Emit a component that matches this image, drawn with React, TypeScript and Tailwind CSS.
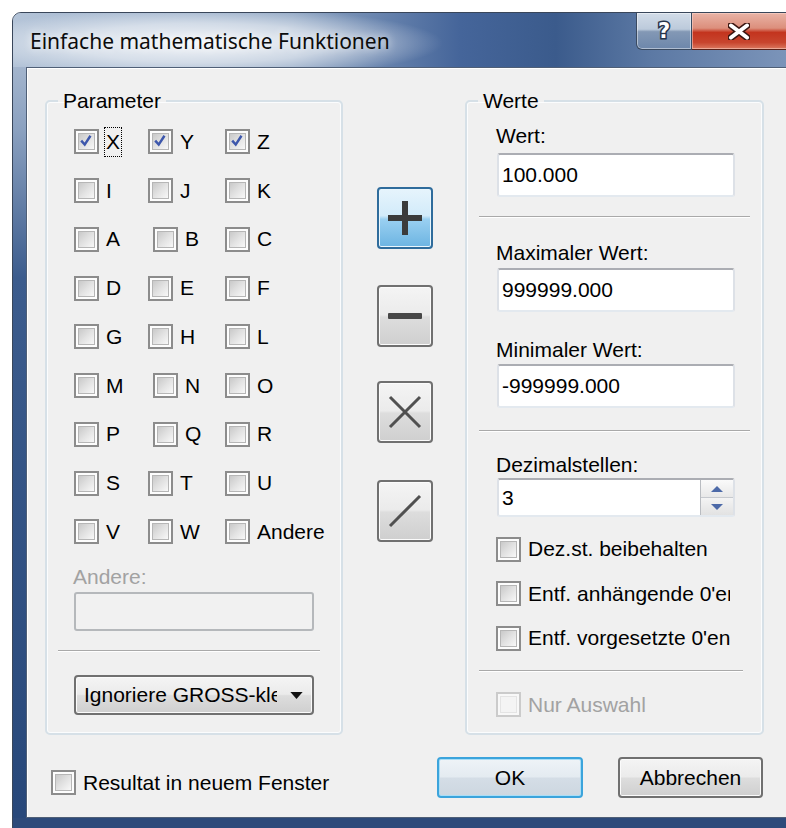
import clsx from "clsx";

const btn =
  "rounded-[4px] border-2 border-[#707070] bg-[linear-gradient(to_bottom,#f4f4f4_0%,#ebebeb_48%,#dddddd_52%,#cfcfcf_100%)] shadow-[inset_0_0_0_1px_#fbfbfb]";
const hotBtn =
  "rounded-[4px] border-2 border-[#2f6c9c] bg-[linear-gradient(to_bottom,#e6f4fc_0%,#d2ebfa_46%,#9ad0f1_52%,#6cb4e2_100%)] shadow-[inset_0_0_0_1px_#e9f6fd]";
const edit =
  "rounded-[3px] border-2 border-t-[#abadb3] border-x-[#dde1e7] border-b-[#e3e9ef] bg-white";

function Box({ checked = false, disabled = false }: { checked?: boolean; disabled?: boolean }) {
  return (
    <span
      className={clsx(
        "flex h-[25px] w-[25px] shrink-0 items-center justify-center border-2",
        disabled ? "border-[#cbcbcb] bg-[#f8f8f8]" : "border-[#8c8c8c] bg-[#fdfdfd]"
      )}
    >
      <span
        className={clsx(
          "relative h-[17px] w-[17px] border",
          disabled
            ? "border-[#e4e4e4] bg-[#f4f4f4]"
            : "border-[#b6b6b6] bg-[linear-gradient(135deg,#c9c9c9_0%,#e2e2e2_50%,#f8f8f8_100%)]"
        )}
      >
        {checked && (
          <svg viewBox="0 0 17 17" className="absolute left-0 top-0 h-[15px] w-[15px]">
            <path d="M2.5 7.5 L6.5 12 L13 2" fill="none" stroke="#3d57ac" strokeWidth="2.8" />
          </svg>
        )}
      </span>
    </span>
  );
}

function Check({
  label,
  checked,
  disabled,
  focus,
  shift,
  clip,
}: {
  label: string;
  checked?: boolean;
  disabled?: boolean;
  focus?: boolean;
  shift?: boolean;
  clip?: string;
}) {
  return (
    <div className={clsx("flex items-center", shift && "ml-[5px]")}>
      <Box checked={checked} disabled={disabled} />
      {focus ? (
        <span className="ml-[5px] border border-dotted border-black px-[1px] leading-[28px]">{label}</span>
      ) : (
        <span
          className={clsx(
            "ml-[7px] whitespace-nowrap",
            disabled && "text-[#a2a2a2]",
            clip && "overflow-hidden",
            clip
          )}
        >
          {label}
        </span>
      )}
    </div>
  );
}

function Separator({ className }: { className?: string }) {
  return <div className={clsx("h-[2px] border-y border-t-[#a9a9a9] border-b-white", className)} />;
}

const letters = [
  ["X", "Y", "Z"],
  ["I", "J", "K"],
  ["A", "B", "C"],
  ["D", "E", "F"],
  ["G", "H", "L"],
  ["M", "N", "O"],
  ["P", "Q", "R"],
  ["S", "T", "U"],
  ["V", "W", "Andere"],
];
const shifted = ["B", "N", "Q"];
const checkedOn = ["X", "Y", "Z"];

function Parameter() {
  return (
    <fieldset className="h-[645px] w-[298px] rounded-[5px] border-2 border-[#d6e0e7] shadow-[inset_0_0_0_1px_#fbfcfd]">
      <legend className="ml-[11px] px-[5px]">Parameter</legend>
      <div className="pt-[5.5px]">
        {letters.map((row) => (
          <div key={row[0]} className="grid h-[48.75px] grid-cols-[74px_77px_auto] items-center pl-[27px]">
            {row.map((l) => (
              <Check
                key={l}
                label={l}
                checked={checkedOn.includes(l)}
                focus={l === "X"}
                shift={shifted.includes(l)}
              />
            ))}
          </div>
        ))}
      </div>
      <div className="ml-[26px] mt-[10px] text-[#a2a2a2]">Andere:</div>
      <div className="ml-[27px] mt-[4px] h-[39px] w-[240px] rounded-[3px] border-2 border-[#b5b8bb] bg-[#f1f1f1]" />
      <Separator className="ml-[11px] mt-[19px] w-[262px]" />
      <div className={clsx(btn, "ml-[27px] mt-[23px] flex h-[40px] w-[240px] items-center pl-[8px]")}>
        <span className="w-[193px] overflow-hidden whitespace-nowrap">Ignoriere GROSS-kleinschreibung</span>
        <svg viewBox="0 0 14 8" className="ml-[13px] h-[7px] w-[13px]">
          <path d="M0 0 H14 L7 8 Z" fill="#111" />
        </svg>
      </div>
    </fieldset>
  );
}

function Werte() {
  return (
    <fieldset className="ml-[32px] h-[645px] w-[299px] rounded-[5px] border-2 border-[#d6e0e7] shadow-[inset_0_0_0_1px_#fbfcfd]">
      <legend className="ml-[11px] px-[5px]">Werte</legend>
      <div className="ml-[29px] mt-[13px]">Wert:</div>
      <div className={clsx(edit, "ml-[30px] mt-[6px] flex h-[44px] w-[238px] items-center pl-[3px]")}>100.000</div>
      <Separator className="ml-[12px] mt-[19px] w-[271px]" />
      <div className="ml-[29px] mt-[24px]">Maximaler Wert:</div>
      <div className={clsx(edit, "ml-[30px] mt-[4px] flex h-[44px] w-[238px] items-center pl-[3px]")}>999999.000</div>
      <div className="ml-[29px] mt-[27px]">Minimaler Wert:</div>
      <div className={clsx(edit, "ml-[30px] mt-[3px] flex h-[44px] w-[238px] items-center pl-[3px]")}>-999999.000</div>
      <Separator className="ml-[12px] mt-[22px] w-[271px]" />
      <div className="ml-[29px] mt-[22px]">Dezimalstellen:</div>
      <div className={clsx(edit, "ml-[30px] mt-[2px] flex h-[39px] w-[238px] items-stretch")}>
        <span className="flex flex-1 items-center pl-[3px]">3</span>
        <div className="flex w-[33px] flex-col border-l border-[#b9bcc1]">
          <div className="flex flex-1 items-center justify-center border-b border-[#c6c9ce] bg-[linear-gradient(to_bottom,#fafafa,#e8e8e8)]">
            <svg viewBox="0 0 12 6" className="h-[6px] w-[12px]">
              <path d="M0 6 L6 0 L12 6 Z" fill="#4d6aa8" />
            </svg>
          </div>
          <div className="flex flex-1 items-center justify-center bg-[linear-gradient(to_bottom,#f4f4f4,#e2e2e2)]">
            <svg viewBox="0 0 12 6" className="h-[6px] w-[12px]">
              <path d="M0 0 H12 L6 6 Z" fill="#4d6aa8" />
            </svg>
          </div>
        </div>
      </div>
      <div className="ml-[29px] mt-[10px]">
        <div className="flex h-[44.5px] items-center">
          <Check label="Dez.st. beibehalten" />
        </div>
        <div className="flex h-[44.5px] items-center">
          <Check label="Entf. anhängende 0'en" clip="w-[202px]" />
        </div>
        <div className="flex h-[44.5px] items-center">
          <Check label="Entf. vorgesetzte 0'en" />
        </div>
      </div>
      <Separator className="ml-[12px] mt-[9px] w-[264px]" />
      <div className="ml-[29px] mt-[11px] flex h-[44px] items-center">
        <Check label="Nur Auswahl" disabled />
      </div>
    </fieldset>
  );
}

function OpButton({ hot, children }: { hot?: boolean; children: React.ReactNode }) {
  return (
    <div className={clsx(hot ? hotBtn : btn, "flex h-[62px] w-[56px] items-center justify-center")}>{children}</div>
  );
}

export default function App() {
  return (
    <div className="h-[828px] w-[786px] overflow-hidden bg-white pl-[12px] pt-[12px] font-['Liberation_Sans',Arial,sans-serif] text-[21px] leading-[22px] text-black">
      <div className="flex h-[830px] w-[800px] flex-col overflow-hidden rounded-tl-[9px] border border-[#39465a] bg-[linear-gradient(to_bottom,#b8c6d8_0%,#8ba1c0_14%,#3c5c8d_32%,#274779_100%)]">
        {/* caption */}
        <div className="flex h-[54px] shrink-0 items-start bg-[radial-gradient(ellipse_240px_36px_at_190px_30px,rgba(255,255,255,0.9)_0%,rgba(255,255,255,0.55)_55%,rgba(255,255,255,0)_100%),linear-gradient(to_right,#b4c4d8_0%,#8ea5c3_35%,#45659a_56%,#3b5b8c_68%,#5c79a4_80%,#8199bd_100%)]">
          <div className="pl-[17px] pt-[13px] font-['Noto_Sans',sans-serif] text-[21px] leading-[30px] text-[#0c0c0c] [text-shadow:0_0_8px_#fff]">
            Einfache mathematische Funktionen
          </div>
          <div className="ml-auto flex">
            <div className="flex h-[37px] w-[56px] items-center justify-center rounded-bl-[6px] border-x border-b border-[#3a4a60] bg-[linear-gradient(to_bottom,#d2dce8_0%,#bccadb_45%,#8398b5_52%,#6d87ab_100%)] shadow-[inset_0_0_0_1px_rgba(255,255,255,0.45)]">
              <span className="font-['DejaVu_Sans',sans-serif] text-[21px] font-bold leading-none text-white [paint-order:stroke_fill] [-webkit-text-stroke:3px_#27344a]">
                ?
              </span>
            </div>
            <div className="flex h-[37px] w-[119px] items-center border-b border-[#5b2219] bg-[linear-gradient(to_bottom,#e9b3a6_0%,#dc8f7c_42%,#c3341e_54%,#c8452e_82%,#db785f_100%)] pl-[36px] shadow-[inset_0_0_0_1px_rgba(255,220,210,0.5)]">
              <svg viewBox="0 0 22 17" className="h-[17px] w-[22px]">
                <path d="M3 2.5 L19 14.5 M19 2.5 L3 14.5" stroke="#3b1711" strokeWidth="7" strokeLinecap="round" />
                <path d="M3 2.5 L19 14.5 M19 2.5 L3 14.5" stroke="#fff" strokeWidth="4" strokeLinecap="round" />
              </svg>
            </div>
          </div>
        </div>

        {/* client area */}
        <div className="ml-[13px] h-[751px] shrink-0 border-b border-l border-t border-[#4f5f76] bg-[#f0f0f0] pl-[18px] pt-[22px] shadow-[inset_1px_1px_0_#ffffff]">
          <div className="flex items-start">
            <Parameter />
            <div className="ml-[34px] flex w-[56px] flex-col pt-[97px]">
              <OpButton hot>
                <svg viewBox="0 0 34 34" className="h-[34px] w-[34px]">
                  <path d="M0 17 H34 M17 0 V34" stroke="#3b3b3b" strokeWidth="6" />
                </svg>
              </OpButton>
              <div className="mt-[36px]">
                <OpButton>
                  <svg viewBox="0 0 34 6" className="h-[6px] w-[34px]">
                    <rect x="0" y="0" width="34" height="6" rx="1" fill="#474747" />
                  </svg>
                </OpButton>
              </div>
              <div className="mt-[34px]">
                <OpButton>
                  <svg viewBox="0 0 34 34" className="h-[34px] w-[34px]">
                    <path d="M2 2 L32 32 M32 2 L2 32" stroke="#505050" strokeWidth="3" />
                  </svg>
                </OpButton>
              </div>
              <div className="mt-[37px]">
                <OpButton>
                  <svg viewBox="0 0 34 34" className="h-[34px] w-[34px]">
                    <path d="M2 32 L32 2" stroke="#505050" strokeWidth="3" />
                  </svg>
                </OpButton>
              </div>
            </div>
            <Werte />
          </div>

          <div className="mt-[22px] flex items-start">
            <div className="ml-[6px] mt-[13px] w-[386px]">
              <Check label="Resultat in neuem Fenster" />
            </div>
            <div className="flex h-[41px] w-[146px] items-center justify-center rounded-[4px] border-2 border-[#3ba4dc] bg-[linear-gradient(to_bottom,#eef3f7_0%,#e4ebf1_48%,#d4dde6_52%,#cdd7e0_100%)] shadow-[inset_0_0_0_1px_#a9def7]">
              OK
            </div>
            <div className={clsx(btn, "ml-[35px] flex h-[41px] w-[145px] items-center justify-center")}>Abbrechen</div>
          </div>
        </div>
        <div className="h-[20px] shrink-0 bg-[#2d4a7a]" />
      </div>
    </div>
  );
}
